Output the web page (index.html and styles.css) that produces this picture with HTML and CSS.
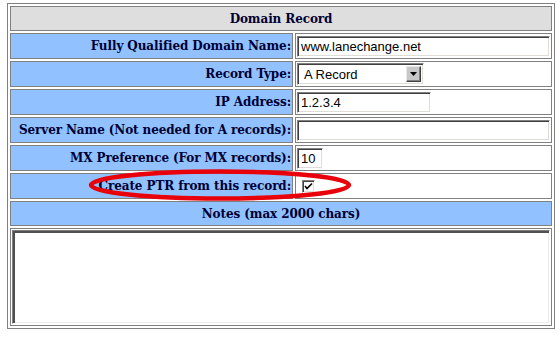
FILE: index.html
```html
<!DOCTYPE html>
<html>
<head>
<meta charset="utf-8">
<link rel="stylesheet" href="styles.css">
</head>
<body>
<table class="form">
  <colgroup><col class="c-label"><col class="c-field"></colgroup>
  <tr><th colspan="2" class="head">Domain Record</th></tr>
  <tr>
    <td class="label">Fully Qualified Domain Name:</td>
    <td class="field"><span class="input w-full">www.lanechange.net</span></td>
  </tr>
  <tr>
    <td class="label">Record Type:</td>
    <td class="field"><span class="select"><span class="sel-text">A Record</span><span class="sel-btn"><svg width="7" height="4" viewBox="0 0 7 4"><path d="M0 0H7L3.5 4Z" fill="#000"/></svg></span></span></td>
  </tr>
  <tr>
    <td class="label">IP Address:</td>
    <td class="field"><span class="input w-ip">1.2.3.4</span></td>
  </tr>
  <tr>
    <td class="label">Server Name (Not needed for A records):</td>
    <td class="field"><span class="input w-full"></span></td>
  </tr>
  <tr>
    <td class="label">MX Preference (For MX records):</td>
    <td class="field"><span class="input w-mx">10</span></td>
  </tr>
  <tr>
    <td class="label">Create PTR from this record:</td>
    <td class="field"><span class="check"><svg width="9" height="9" viewBox="0 0 9 9"><path d="M1 4L3 6.5L8 1.5" fill="none" stroke="#000" stroke-width="1.6"/></svg></span></td>
  </tr>
  <tr><td colspan="2" class="label center">Notes (max 2000 chars)</td></tr>
  <tr><td colspan="2" class="notes"><span class="textarea"></span></td></tr>
</table>
<svg class="annot" width="270" height="36" viewBox="0 0 270 36"><ellipse cx="133" cy="18" rx="129" ry="13.5" fill="none" stroke="#e8000b" stroke-width="4.5"/></svg>
</body>
</html>
```
FILE: styles.css
```css
html, body { background: #fff; }
body {
  margin: 3px 0 0 7px;
  position: relative;
  font-family: "DejaVu Serif", serif;
}
.form {
  box-sizing: border-box;
  width: 548px;
  table-layout: fixed;
  border: 1px solid #808080;
  border-collapse: separate;
  border-spacing: 2px;
}
.c-label { width: 283px; }
.form th, .form td {
  border: 1px solid #808080;
  padding: 1px;
}
.head, .label {
  font-family: "DejaVu Serif", serif;
  font-size: 12px;
  font-weight: bold;
  color: #000033;
  letter-spacing: -0.1px;
}
.head {
  background: #dedede;
  height: 21px;
  text-align: center;
}
.label {
  background: #91c1ff;
  height: 22px;
  text-align: right;
  white-space: nowrap;
}
.label.center { text-align: center; height: 21px; }
.field {
  background: #fff;
  height: 22px;
  vertical-align: middle;
}
.input {
  display: block;
  box-sizing: border-box;
  height: 21px;
  border-top: 1px solid #808080;
  border-left: 1px solid #808080;
  border-right: 1px solid #fff;
  border-bottom: 1px solid #fff;
  box-shadow: inset 1px 1px 0 #404040, inset -1px -1px 0 #e0ddd8;
  font-family: "Liberation Sans", Arial, sans-serif;
  font-size: 13px;
  line-height: 19px;
  padding: 0 2px 0 3px;
  color: #000;
  background: #fff;
}
.w-full { width: 100%; }
.w-ip { width: 134px; }
.w-mx { width: 26px; }
.select {
  display: flex;
  align-items: center;
  box-sizing: border-box;
  width: 127px;
  height: 22px;
  border-top: 1px solid #808080;
  border-left: 1px solid #808080;
  border-right: 1px solid #fff;
  border-bottom: 1px solid #fff;
  box-shadow: inset 1px 1px 0 #404040, inset -1px -1px 0 #e0ddd8;
  padding: 2px;
  font-family: "Liberation Sans", Arial, sans-serif;
  font-size: 13px;
  background: #fff;
}
.sel-text { flex: 1; padding-left: 4px; }
.sel-btn {
  display: flex;
  align-items: center;
  justify-content: center;
  box-sizing: border-box;
  width: 15px;
  height: 16px;
  background: #c8c8c8;
  border-top: 1px solid #e8e8e8;
  border-left: 1px solid #e8e8e8;
  border-right: 1px solid #404040;
  border-bottom: 1px solid #404040;
  box-shadow: inset -1px -1px 0 #808080;
}
.check {
  display: flex;
  align-items: center;
  justify-content: center;
  box-sizing: border-box;
  width: 13px;
  height: 13px;
  margin-left: 5px;
  border-top: 1px solid #808080;
  border-left: 1px solid #808080;
  border-right: 1px solid #fff;
  border-bottom: 1px solid #fff;
  box-shadow: inset 1px 1px 0 #404040, inset -1px -1px 0 #e0ddd8;
  background: #fff;
}
.notes {
  background: #fff;
  height: 94px;
  vertical-align: top;
}
.textarea {
  display: block;
  box-sizing: border-box;
  width: 100%;
  height: 94px;
  border-top: 1px solid #808080;
  border-left: 1px solid #808080;
  border-right: 1px solid #fff;
  border-bottom: 1px solid #fff;
  box-shadow: inset 2px 2px 0 #505050, inset -1px -1px 0 #ececec;
  background: #fff;
}
.annot {
  position: absolute;
  left: 80px;
  top: 164px;
}
```
